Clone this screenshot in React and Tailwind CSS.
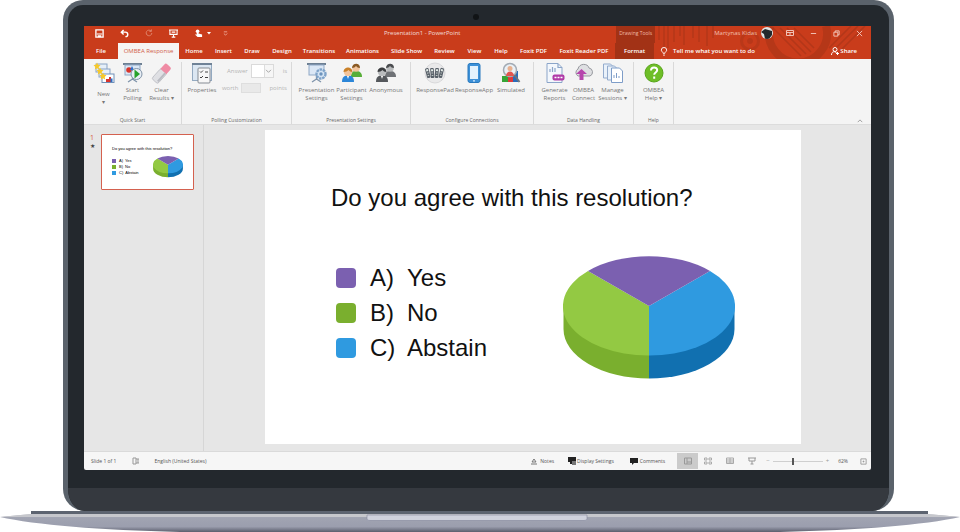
const TABS = [
  ["File", "w-[34px]"],
  ["OMBEA Response", "w-[61px]", "active"],
  ["Home", "w-[30px]"],
  ["Insert", "w-[29px]"],
  ["Draw", "w-[28px]"],
  ["Design", "w-[32px]"],
  ["Transitions", "w-[42px]"],
  ["Animations", "w-[45px]"],
  ["Slide Show", "w-[43px]"],
  ["Review", "w-[33px]"],
  ["View", "w-[27px]"],
  ["Help", "w-[26px]"],
  ["Foxit PDF", "w-[39px]"],
  ["Foxit Reader PDF", "w-[62px]"],
  ["Format", "w-[39px]", "context"],
];

const OPTIONS = [
  ["A)", "Yes", "bg-[#7b60b0]"],
  ["B)", "No", "bg-[#7aaf2e]"],
  ["C)", "Abstain", "bg-[#2f9ae0]"],
];

function Pie({ className }) {
  return (
    <svg viewBox="0 0 172 124" className={className} role="img" aria-label="Results pie chart">
      <path d="M0.5 50V73A85.5 49.5 0 0 0 86 122.500V60Z" fill="#7aaf2e" />
      <path d="M171.500 50V73A85.500 49.500 0 0 1 86 122.500V60Z" fill="#1170b0" />
      <path d="M86 50L25 15A85.500 49.500 0 0 0 86 99.500Z" fill="#93c943" />
      <path d="M86 50L147 15A85.500 49.500 0 0 1 86 99.500Z" fill="#2f9ae0" />
      <path d="M86 50L25 15A85.500 49.500 0 0 1 147 15Z" fill="#7b60b0" />
    </svg>
  );
}

function Ico({ children, className = "size-[22px]" }) {
  return (
    <svg viewBox="0 0 22 22" className={className} fill="none" aria-hidden="true">
      {children}
    </svg>
  );
}

const Star = ({ x, y }) => (
  <path transform={`translate(${x} ${y})`} d="M0-3.500L1-1.200 3.500-.9 1.700.9 2.200 3.500 0 2.200-2.200 3.500-1.700.9-3.500-.9-1-1.200Z" fill="#f8c928" />
);

const NewIcon = () => (
  <Ico>
    <rect x="3" y="2" width="11" height="8" fill="#e6eff9" stroke="#8aa3c4" />
    <rect x="6" y="7" width="11" height="8" fill="#e6eff9" stroke="#8aa3c4" />
    <rect x="9" y="12" width="12" height="8.500" fill="#fff" stroke="#6f8fb8" />
    <Star x={4} y={4} />
    <Star x={7} y={9} />
    <Star x={10} y={14} />
    <path d="M13 20v-3h3v-2h2v5z" fill="#d8342b" />
    <path d="M17.500 20v-3.500h2V20" fill="#2b6fc4" />
  </Ico>
);
const Screen = () => (
  <>
    <path d="M1 2h19" stroke="#6d7f92" strokeWidth="2" />
    <rect x="3" y="3" width="15" height="10" fill="#dbe7f5" stroke="#8fa8c5" />
    <path d="M10.500 13v5M6 20l4.500-3 4.500 3" stroke="#7f94ab" strokeWidth="1.300" />
  </>
);
const StartIcon = () => (
  <Ico>
    <Screen />
    <circle cx="7" cy="8" r="2.800" fill="#d8342b" />
    <path d="M8 8l2-4 2.500 5z" fill="#2f6fc9" />
    <circle cx="14.500" cy="12" r="5.500" fill="#e8eef5" stroke="#8294a8" />
    <path d="M12.500 7.500l5.500 4.500-5.500 4.500z" fill="#27a22c" />
  </Ico>
);
const EraserIcon = () => (
  <Ico>
    <g transform="rotate(-48 11 11)">
      <rect x="0" y="7" width="14" height="8" rx="2" fill="#dfe0e4" stroke="#b4b6bd" strokeWidth=".7" />
      <path d="M13 7h6a2 2 0 0 1 2 2v4a2 2 0 0 1-2 2h-6z" fill="#ef8ba4" />
      <path d="M2 13.500h11" stroke="#b9bbc2" strokeWidth="2" />
    </g>
  </Ico>
);
const PropertiesIcon = () => (
  <Ico>
    <rect x="1.500" y="2.500" width="19" height="16" fill="#dce7f2" stroke="#93a9c0" />
    <path d="M1 2h20" stroke="#6f8296" strokeWidth="2" />
    <rect x="7" y="6" width="12" height="15" rx="1" fill="#f7f7f7" stroke="#858b93" />
    <path d="M9 9.500l1 1 2-2M9 15l1 1 2-2M14 10h3M14 15.500h3" stroke="#444" />
  </Ico>
);
const PresentationIcon = () => (
  <Ico>
    <Screen />
    <circle cx="15" cy="12" r="4.500" fill="#d5e5f5" stroke="#7fa3c9" strokeWidth="2.400" strokeDasharray="2.500 .7" />
    <circle cx="15" cy="12" r="1.700" fill="#6d94bd" />
  </Ico>
);
const People = ({ a, b, ha, hb, skin }) => (
  <Ico>
    <path d="M10 15c0-5 2-6 5-6s6 1 6 6z" fill={b} />
    <circle cx="15" cy="6" r="3.800" fill={skin} />
    <path d="M11 6c0-5 8-6 8 0-2 0-3-1-4-2-1 1-2 2-4 2z" fill={hb} />
    <path d="M1 20c0-5 2-6.500 6-6.500s6 1.500 6 6.500z" fill={a} />
    <circle cx="7" cy="10" r="4.200" fill={skin} />
    <path d="M2.500 10c0-6 9-6 9 0-2 0-3-1-4-2-1 1-3 2-5 2z" fill={ha} />
    <path d="M6 14l1 3 1-3z" fill="#fff" />
  </Ico>
);
const PadIcon = () => (
  <Ico>
    <circle cx="11" cy="11" r="10" fill="#e9e9ea" stroke="#cfcfd1" strokeWidth=".7" />
    {[2, 6.500, 11, 15.500].map((x, i) => (
      <g key={x} transform={`rotate(${i * 9 - 14} ${x + 2} 11)`}>
        <rect x={x} y="6" width="3.600" height="10" rx="1" fill="#59616a" />
        <rect x={x + 0.8} y="7.200" width="2" height="2" fill="#e4ece8" />
        <path d={`M${x + 1} 11h1.600M${x + 1} 13.500h1.600`} stroke="#bfc7c4" />
      </g>
    ))}
  </Ico>
);
const PhoneIcon = () => (
  <Ico>
    <rect x="5" y="1.500" width="12" height="19" rx="2" fill="#3d91d8" stroke="#2879be" />
    <rect x="7" y="4" width="8" height="13" fill="#e3f2fd" />
    <circle cx="11" cy="18.800" r=".9" fill="#dff0ff" />
  </Ico>
);
const SimIcon = () => (
  <Ico>
    <rect x="2" y="14" width="6" height="6" fill="#36a536" />
    <rect x="8" y="12" width="5" height="8" fill="#df3a3a" />
    <rect x="13" y="9" width="5" height="11" fill="#2b6cb8" />
    <circle cx="10" cy="8" r="6.500" fill="#eaf0f5" stroke="#a3abb4" strokeWidth="1.500" />
    <circle cx="10" cy="6.500" r="2.500" fill="#e9b18f" />
    <path d="M6 14c0-6 8-6 8 0z" fill="#e2564f" />
    <path d="M14.500 13l5 7" stroke="#6c747d" strokeWidth="2" />
  </Ico>
);
const ReportIcon = () => (
  <Ico>
    <path d="M3 1.500h11l4 4v15H3z" fill="#f3f7fc" stroke="#8ba5c9" />
    <path d="M14 1.500v4h4M6 10V7M8.500 10V5M11 10V6" stroke="#8ba5c9" strokeWidth="1.200" />
    <rect x="8.500" y="12.500" width="12" height="6" rx="2" fill="#b13ba8" />
    <path d="M10.500 15.500h2M13.500 15.500h2M16.500 15.500h2" stroke="#fff" strokeWidth="1.500" />
  </Ico>
);
const CloudIcon = () => (
  <Ico>
    <path d="M5 14a4 4 0 0 1 0-7c1-6 10-6 11-1a4.200 4.200 0 0 1 1 8z" fill="#dedfe2" stroke="#97999f" />
    <path d="M6.500 18v-6H3L8.500 7l5.500 5h-3.500v6z" fill="#b646ad" />
  </Ico>
);
const SessionsIcon = () => (
  <Ico>
    <path d="M1.500 2h7l2 2v12h-9z" fill="#e9f1fa" stroke="#93abcd" />
    <path d="M5.500 4h7l2 2v12h-9z" fill="#e9f1fa" stroke="#93abcd" />
    <path d="M9.500 6h8l3 3v11.500h-11z" fill="#fff" stroke="#7e9dc8" />
    <path d="M12 16v-3M14.500 16v-5M17 16v-2" stroke="#7e9dc8" />
  </Ico>
);
const HelpIcon = () => (
  <Ico>
    <circle cx="11" cy="11" r="9" fill="#6ebe27" stroke="#58a51b" />
    <path d="M8 8.500c0-4 6.200-3.800 6.200-.4 0 2.500-3 2.400-3 4.700M11.200 14.500v2.200" stroke="#fff" strokeWidth="2" />
  </Ico>
);

function Tool({ icon, lines, width = "w-[29px]", low }) {
  return (
    <button className={`flex shrink-0 flex-col items-center ${width}`}>
      {icon}
      <span className={`whitespace-nowrap text-center text-[6px] leading-[8px] ${low ? "pt-[6px]" : "pt-[2px]"}`}>
        {lines.map((l) => (
          <span key={l} className="block">{l}</span>
        ))}
      </span>
    </button>
  );
}

function Group({ name, width, children }) {
  return (
    <section aria-label={name} className={`flex shrink-0 flex-col border-r border-[#d9d9d9] ${width}`}>
      <div className="flex flex-1 justify-center">{children}</div>
      <h2 className="text-center text-[5px] leading-[8px] text-[#666]">{name}</h2>
    </section>
  );
}

function Header() {
  return (
    <header className="relative bg-[#c93c1b] text-white">
      <svg viewBox="0 0 240 33" className="absolute right-0 top-0 h-[33px] w-[240px]" fill="none" stroke="#a93418" aria-hidden="true">
        <path d="M28 0v14M33 0v22M37 0v22M43 0v16M49 0v10M53 0v19M62 0v12M68 0v16M76 0v20M82 0v12" strokeWidth="2" opacity=".5" />
        <circle cx="119" cy="15" r="8.500" strokeWidth="3" opacity=".5" />
        <circle cx="119" cy="15" r="2.500" fill="#a93418" opacity=".5" />
        <path d="M139 0a29 29 0 1 0 56 0" strokeWidth="8" opacity=".6" />
        <path d="M142 2l28 28M149 2l26 26M156 2l24 24M163 2l20 20M198 22L220 0M203 24L227 0M209 25L234 0" strokeWidth="1.500" opacity=".7" />
      </svg>
      <div className="relative flex h-[17px] items-center pb-[3px] text-[6px] leading-[8px]">
        <div className="flex w-[300px] shrink-0 items-center gap-4 pl-[11px]">
          <button aria-label="Save">
            <svg viewBox="0 0 10 10" className="size-[9px]"><path d="M1 1h8v8H1z" fill="none" stroke="#fff" strokeWidth="1.500" /><path d="M2 5h6v1H2zM3 7h4v2H3z" fill="#fff" /></svg>
          </button>
          <button aria-label="Undo">
            <svg viewBox="0 0 10 10" className="size-[9px]" fill="none" stroke="#fff" strokeWidth="1.600"><path d="M4 1L1.500 3.500 4 6M2 3.500h4c3.500 0 3.500 5 0 5" /></svg>
          </button>
          <button aria-label="Redo">
            <svg viewBox="0 0 10 10" className="size-[8px]" fill="none" stroke="#e0866f" strokeWidth="1.200"><path d="M7.500 2.500A3.500 3.500 0 1 0 8.500 5M8 .5v2.500H5.500" /></svg>
          </button>
          <button aria-label="Start slide show">
            <svg viewBox="0 0 10 10" className="size-[9px]" fill="none" stroke="#fff" strokeWidth="1.200"><path d="M0 1.200h10M1 1v5h8V1M3 3.500h4M5 6v3M3 9h4" /></svg>
          </button>
          <button aria-label="Touch mode" className="flex items-center gap-1">
            <svg viewBox="0 0 10 10" className="size-[9px]"><circle cx="4" cy="2.500" r="2" fill="#fff" /><path d="M3 2h2v3l4 1v3H4L1 6h2z" fill="#fff" /></svg>
            <svg viewBox="0 0 4 3" className="h-[3px] w-[4px]"><path d="M0 0h4L2 2.500z" fill="#fff" /></svg>
          </button>
          <button aria-label="Customize toolbar" className="-ml-1">
            <svg viewBox="0 0 6 6" className="size-[5px]" stroke="#f0b3a3" fill="none"><path d="M1 1h4M1 3l2 2 2-2" /></svg>
          </button>
        </div>
        <p className="whitespace-nowrap opacity-80">Presentation1 - PowerPoint</p>
        <div className="flex h-full flex-1 items-center">
          <span className="ml-auto mr-[59px] flex h-[17px] w-[39px] items-center justify-center self-start whitespace-nowrap bg-[#a23216] pb-[3px] text-[5px] text-[#f0b9a8]">Drawing Tools</span>
          <span className="whitespace-nowrap text-[#f3c0b2]">Martynas Kidas</span>
          <span className="ml-[4px] size-[12px] overflow-hidden rounded-full bg-[#dfe3e4]">
            <svg viewBox="0 0 12 12"><path d="M0 5l4-3 7 2v4l-3 4H4L3 7z" fill="#23282b" /></svg>
          </span>
          <div className="ml-[13px] mr-[8px] flex items-center gap-[16px]">
            <button aria-label="Ribbon display options"><svg viewBox="0 0 8 8" className="size-[8px]" fill="none" stroke="#f2c1b4"><path d="M.5 1.500h7v5h-7zM.5 3.500h7M4 3.500v3" /></svg></button>
            <button aria-label="Minimize"><svg viewBox="0 0 8 8" className="size-[7px]" stroke="#f5d0c6"><path d="M1 4h6" /></svg></button>
            <button aria-label="Restore"><svg viewBox="0 0 8 8" className="size-[7px]" fill="none" stroke="#f5d0c6"><path d="M1 2.500h4.500V7H1zM2.500 2.500V1H7v4.500H5.500" /></svg></button>
            <button aria-label="Close"><svg viewBox="0 0 8 8" className="size-[7px]" stroke="#f5d0c6"><path d="M1 1l6 6M7 1L1 7" /></svg></button>
          </div>
        </div>
      </div>
      <nav className="relative flex h-[16px] text-[6px] font-semibold leading-[8px]">
        {TABS.map(([label, width, kind]) => (
          <button
            key={label}
            className={`shrink-0 whitespace-nowrap text-center ${width} ${
              kind === "active" ? "bg-[#f6f4f3] font-normal text-[#d0604a]" : kind === "context" ? "bg-[#a23216]" : ""
            }`}
          >
            {label}
          </button>
        ))}
        <button className="ml-[6px] flex items-center gap-[5px] whitespace-nowrap">
          <svg viewBox="0 0 8 10" className="h-[9px] w-[8px]" fill="none" stroke="#fff"><path d="M3 7C3 5.500 1 5 1 3.500a3 3 0 0 1 6 0C7 5 5 5.500 5 7zM3 9h2" /></svg>
          Tell me what you want to do
        </button>
        <button className="ml-auto mr-[14px] flex items-center gap-px">
          <svg viewBox="0 0 8 8" className="size-[8px]" fill="none" stroke="#fff"><circle cx="4" cy="2.500" r="2" /><path d="M.5 8c0-4 4-4 5-2M6.500 5v3M5 6.500h3" /></svg>
          Share
        </button>
      </nav>
    </header>
  );
}

function Ribbon() {
  return (
    <div className="flex h-[66px] border-b border-[#dcdcdc] bg-[#f4f4f4] pt-[3px] text-[#777]">
      <Group name="Quick Start" width="w-[98px]">
        <Tool icon={<NewIcon />} lines={["New", "▾"]} low />
        <Tool icon={<StartIcon />} lines={["Start", "Polling"]} />
        <Tool icon={<EraserIcon />} lines={["Clear", "Results ▾"]} />
      </Group>
      <Group name="Polling Customization" width="w-[110px]">
        <Tool icon={<PropertiesIcon />} lines={["Properties"]} width="w-[32px]" />
        <div className="flex flex-col gap-[5px] pl-[4px] pt-[2px] text-[6px] leading-[8px] text-[#b4b4b4]">
          <div className="flex h-[14px] items-center gap-[3px] pl-[5px]">
            <label htmlFor="answer">Answer</label>
            <span className="flex h-[14px] items-center border border-[#dadada] bg-white">
              <select id="answer" className="h-[12px] w-[21px] appearance-none bg-[linear-gradient(90deg,#fff_12px,#ddd_12px,#ddd_13px,#f6f6f6_13px)]" />
              <svg viewBox="0 0 8 6" className="-ml-[8px] mr-px h-[5px] w-[7px]" fill="none" stroke="#999"><path d="M1 1l3 3 3-3" /></svg>
            </span>
            <span className="pl-[6px]">is</span>
          </div>
          <div className="flex h-[10px] items-center gap-[3px]">
            <label htmlFor="worth">worth</label>
            <input id="worth" className="h-[10px] w-[20px] border border-[#dedede] bg-[#e9e9e9]" />
            <span className="pl-[5px]">points</span>
          </div>
        </div>
      </Group>
      <Group name="Presentation Settings" width="w-[119px]">
        <Tool icon={<PresentationIcon />} lines={["Presentation", "Settings"]} width="w-[36px]" />
        <Tool icon={<People a="#2c86d8" b="#57ae38" ha="#c9812a" hb="#8a5a24" skin="#f2c49b" />} lines={["Participant", "Settings"]} width="w-[34px]" />
        <Tool icon={<People a="#55585c" b="#6f7276" ha="#3a3c3f" hb="#4b4d50" skin="#b9bbbd" />} lines={["Anonymous"]} width="w-[35px]" />
      </Group>
      <Group name="Configure Connections" width="w-[123px]">
        <Tool icon={<PadIcon />} lines={["ResponsePad"]} width="w-[40px]" />
        <Tool icon={<PhoneIcon />} lines={["ResponseApp"]} width="w-[38px]" />
        <Tool icon={<SimIcon />} lines={["Simulated"]} width="w-[36px]" />
      </Group>
      <Group name="Data Handling" width="w-[100px]">
        <Tool icon={<ReportIcon />} lines={["Generate", "Reports"]} />
        <Tool icon={<CloudIcon />} lines={["OMBEA", "Connect"]} />
        <Tool icon={<SessionsIcon />} lines={["Manage", "Sessions ▾"]} />
      </Group>
      <Group name="Help" width="w-[40px]">
        <Tool icon={<HelpIcon />} lines={["OMBEA", "Help ▾"]} />
      </Group>
      <button aria-label="Collapse ribbon" className="ml-auto mr-[8px] self-end pb-[1px]">
        <svg viewBox="0 0 8 5" className="h-[4px] w-[6px]" fill="none" stroke="#888"><path d="M1 4l3-3 3 3" /></svg>
      </button>
    </div>
  );
}

function Workspace() {
  return (
    <div className="flex flex-1 bg-[#e6e6e6]">
      <aside className="flex w-[120px] shrink-0 items-start border-r border-[#d6d6d6] pl-[6px] pt-[9px]">
        <div className="w-[11px] text-[7px] leading-[8px] text-[#d8553f]">
          1<span className="block text-[6px] text-[#444]">★</span>
        </div>
        <button className="flex h-[56px] w-[93px] flex-col rounded-[1px] border border-[#d4614f] bg-white pl-[10px] pt-[11px] text-left font-['Liberation_Sans',sans-serif] text-[4px] leading-[6px] text-black">
          <span className="whitespace-nowrap">Do you agree with this resolution?</span>
          <span className="flex w-full items-center justify-between pr-[10px] pt-[4px]">
            <span>
              {OPTIONS.map(([letter, text, color]) => (
                <span key={letter} className="flex items-center gap-[2px]">
                  <span className={`mr-px size-[4px] ${color}`} />
                  <span>{letter}</span>
                  <span>{text}</span>
                </span>
              ))}
            </span>
            <Pie className="w-[30px]" />
          </span>
        </button>
      </aside>
      <main className="flex flex-1 pb-[7px] pl-[61px] pr-[70px] pt-[5px]">
        <article className="flex-1 bg-white pl-[66px] pr-[66px] pt-[54px] font-['Liberation_Sans',Arial,sans-serif] text-[24px] leading-[28px] text-[#111]">
          <h1 className="whitespace-nowrap">Do you agree with this resolution?</h1>
          <div className="flex items-start justify-between pt-[44px]">
            <ul className="pl-[5px] pt-[4px]">
              {OPTIONS.map(([letter, text, color]) => (
                <li key={letter} className="flex h-[35px] items-center">
                  <span className={`mr-[14px] size-[20px] rounded-[4px] ${color}`} />
                  <span className="w-[37px]">{letter}</span>
                  <span>{text}</span>
                </li>
              ))}
            </ul>
            <Pie className="w-[172px]" />
          </div>
        </article>
      </main>
    </div>
  );
}

function StatusBar() {
  return (
    <footer className="flex h-[19px] items-center border-t border-[#dadada] bg-[#f6f6f6] pl-[7px] pr-[4px] text-[5px] leading-[8px] text-[#555]">
      <span>Slide 1 of 1</span>
      <svg viewBox="0 0 8 8" className="ml-4 size-[8px]" fill="none" stroke="#999"><path d="M1 1h3v6H1zM4 2h3M4 6h3M6 2v4" /></svg>
      <span className="ml-[14px]">English (United States)</span>
      <button className="ml-auto flex items-center gap-[3px]">
        <svg viewBox="0 0 6 7" className="h-[7px] w-[6px]" fill="none" stroke="#777"><path d="M3 1L1 4h4zM0 6h6" /></svg>
        Notes
      </button>
      <button className="ml-[14px] flex items-center gap-px">
        <svg viewBox="0 0 8 8" className="size-[8px]"><path d="M0 0h8v5H6L4 7H2V5H0z" fill="#222" /><path d="M4 4h4v4H4z" fill="#777" /></svg>
        Display Settings
      </button>
      <button className="ml-[16px] flex items-center gap-[2px]">
        <svg viewBox="0 0 8 7" className="h-[7px] w-[8px]"><path d="M0 0h8v5H4L2 7V5H0z" fill="#222" /></svg>
        Comments
      </button>
      <button aria-label="Normal view" className="ml-[12px] flex h-[16px] w-[21px] items-center justify-center bg-[#cbcbcb]">
        <svg viewBox="0 0 8 8" className="size-[8px]" fill="none" stroke="#999"><path d="M.5 1h7v6h-7zM3 1v6M3 5h4" /></svg>
      </button>
      <button aria-label="Slide sorter" className="ml-[6px]">
        <svg viewBox="0 0 8 8" className="size-[8px]" fill="none" stroke="#aaa"><path d="M.5 1h2.500v2H.5zM5 1h2.500v2H5zM.5 5h2.500v2H.5zM5 5h2.500v2H5z" /></svg>
      </button>
      <button aria-label="Reading view" className="ml-[14px]">
        <svg viewBox="0 0 8 8" className="size-[8px]" fill="none" stroke="#aaa"><path d="M.5 1H4v5.500H.5zM4 1h3.500v5.500H4M1 3h6M1 5h6" /></svg>
      </button>
      <button aria-label="Slide show" className="ml-[14px]">
        <svg viewBox="0 0 8 8" className="size-[8px]" fill="none" stroke="#999"><path d="M0 1h8M1 1v3h6V1M4 4v3M2.500 7h3" /></svg>
      </button>
      <button aria-label="Zoom out" className="ml-[10px] text-[6px] text-[#999]">−</button>
      <input
        type="range"
        aria-label="Zoom"
        defaultValue="40"
        className="mx-[3px] h-[8px] w-[50px] appearance-none bg-[linear-gradient(#cfcfcf,#cfcfcf)] bg-[length:100%_1px] bg-center bg-no-repeat [&::-webkit-slider-thumb]:h-[7px] [&::-webkit-slider-thumb]:w-[2px] [&::-webkit-slider-thumb]:appearance-none [&::-webkit-slider-thumb]:bg-[#555]"
      />
      <button aria-label="Zoom in" className="text-[6px] text-[#999]">+</button>
      <span className="ml-[9px]">62%</span>
      <button aria-label="Fit slide" className="ml-[12px]">
        <svg viewBox="0 0 8 8" className="size-[7px]" fill="none" stroke="#999"><path d="M1 1h6v6H1zM3 4h2M4 3v2" /></svg>
      </button>
    </footer>
  );
}

export default function App() {
  return (
    <div className="flex min-h-screen flex-col bg-white font-['Open_Sans','Noto_Sans',sans-serif]">
      <div className="ml-[63px] mr-[66px] flex flex-1 flex-col overflow-hidden rounded-t-[20px] rounded-b-[22px] border-x-[5px] border-t-[5px] border-[#5a626b] bg-[#23282d]">
        <div className="flex h-[21px] items-center justify-center pr-[6px]">
          <span className="mt-[3px] size-[6px] rounded-full bg-[#111416]" />
        </div>
        <div className="ml-4 mr-[18px] flex flex-1 flex-col overflow-hidden rounded-b-[2px]">
          <Header />
          <Ribbon />
          <Workspace />
          <StatusBar />
        </div>
        <div className="mt-[18px] h-[23px] bg-[#35393f]" />
      </div>
      <svg viewBox="0 0 960 21" preserveAspectRatio="none" className="h-[21px] w-full" aria-hidden="true">
        <defs>
          <linearGradient id="base" x1="0" y1="0" x2="0" y2="1">
            <stop offset="0" stopColor="#c9cad0" />
            <stop offset=".2" stopColor="#a1a4b2" />
            <stop offset=".7" stopColor="#9b9eae" />
            <stop offset="1" stopColor="#5c5f6e" />
          </linearGradient>
        </defs>
        <path d="M31 0H928V4H31Z" fill="#5d6470" />
        <path d="M0 6L31 3H928L960 6C925 14 860 19 780 21H180C100 19 35 14 0 6Z" fill="url(#base)" />
        <path d="M0 6L31 3H928L960 6Z" fill="#c6c7cc" />
        <path d="M367 4H587V8Q587 9.500 584 9.500H370Q367 9.500 367 8Z" fill="#d0d2dd" stroke="#83879a" strokeWidth=".6" />
      </svg>
    </div>
  );
}
